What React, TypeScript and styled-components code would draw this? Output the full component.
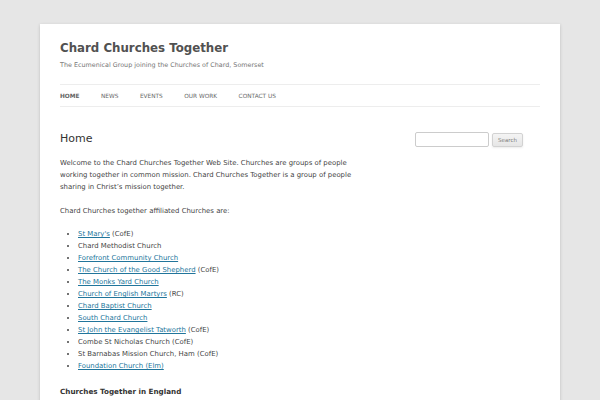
import React from 'react';
import styled, { createGlobalStyle } from 'styled-components';

const GlobalStyle = createGlobalStyle`
  html, body {
    margin: 0;
    padding: 0;
    background: #e6e6e6;
    font-family: "DejaVu Sans", "Open Sans", sans-serif;
    color: #444;
  }
`;

const Page = styled.div`
  width: 480px;
  margin: 24px 0 0 40px;
  padding: 0 20px 20px;
  background: #fff;
  box-shadow: rgba(100, 100, 100, 0.3) 0 1px 3px;
  min-height: 400px;
`;

const Header = styled.header`
  padding-top: 17px;
`;

const SiteTitle = styled.h1`
  margin: 0;
  font-size: 11.8px;
  line-height: 15px;
  font-weight: bold;
  color: #515151;
`;

const Tagline = styled.h2`
  margin: 4px 0 0;
  font-size: 6.4px;
  line-height: 10px;
  font-weight: normal;
  color: #757575;
`;

const Nav = styled.nav`
  margin-top: 14px;
  border-top: 1px solid #ededed;
  border-bottom: 1px solid #ededed;
`;

const NavList = styled.ul`
  display: flex;
  margin: 0;
  padding: 0;
  list-style: none;
  height: 21px;
  align-items: center;
`;

const NavItem = styled.li<{ $current?: boolean }>`
  margin-right: 21.5px;
  font-size: 5.8px;
  text-transform: uppercase;
  color: ${(p) => (p.$current ? '#636363' : '#6a6a6a')};
  font-weight: ${(p) => (p.$current ? 'bold' : 'normal')};
`;

const Main = styled.div`
  display: flex;
  justify-content: space-between;
  margin-top: 25px;
`;

const Content = styled.main`
  width: 312px;
`;

const Sidebar = styled.aside`
  width: 125px;
`;

const EntryTitle = styled.h1`
  margin: 0 0 11px;
  font-size: 11px;
  line-height: 14px;
  font-weight: normal;
  color: #333;
`;

const Para = styled.p`
  margin: 0 0 12px;
  font-size: 6.92px;
  line-height: 12px;
`;

const ChurchList = styled.ul`
  margin: -1px 0 14px 18px;
  padding: 0;
  list-style: disc outside;
  font-size: 6.92px;
  line-height: 12px;
`;

const Link = styled.a`
  color: #21759b;
  text-decoration: underline;
`;

const SubHeading = styled.h3`
  margin: 0;
  font-size: 7.2px;
  line-height: 12px;
  font-weight: bold;
  color: #333;
`;

const SearchForm = styled.form`
  display: flex;
  align-items: center;
  gap: 3px;
`;

const SearchInput = styled.input`
  box-sizing: border-box;
  width: 74px;
  height: 15px;
  border: 1px solid #ccc;
  border-radius: 2px;
  padding: 0 3px;
  font-size: 6px;
`;

const SearchButton = styled.button`
  box-sizing: border-box;
  width: 31px;
  height: 14px;
  padding: 0;
  font-family: inherit;
  font-size: 5.5px;
  color: #7c7c7c;
  background: linear-gradient(#f4f4f4, #e6e6e6);
  border: 1px solid #d2d2d2;
  border-radius: 2px;
  box-shadow: 0 1px 2px rgba(64, 64, 64, 0.1);
`;

const navItems = ['Home', 'News', 'Events', 'Our Work', 'Contact Us'];

const churches: { name: string; link?: boolean; note?: string }[] = [
  { name: "St Mary's", link: true, note: '(CofE)' },
  { name: 'Chard Methodist Church' },
  { name: 'Forefront Community Church', link: true },
  { name: 'The Church of the Good Shepherd', link: true, note: '(CofE)' },
  { name: 'The Monks Yard Church', link: true },
  { name: 'Church of English Martyrs', link: true, note: '(RC)' },
  { name: 'Chard Baptist Church', link: true },
  { name: 'South Chard Church', link: true },
  { name: 'St John the Evangelist Tatworth', link: true, note: '(CofE)' },
  { name: 'Combe St Nicholas Church (CofE)' },
  { name: 'St Barnabas Mission Church, Ham (CofE)' },
  { name: 'Foundation Church (Elm)', link: true },
];

export default function App() {
  return (
    <>
      <GlobalStyle />
      <Page>
        <Header>
          <SiteTitle>Chard Churches Together</SiteTitle>
          <Tagline>The Ecumenical Group joining the Churches of Chard, Somerset</Tagline>
          <Nav>
            <NavList>
              {navItems.map((item, i) => (
                <NavItem key={item} $current={i === 0}>
                  {item}
                </NavItem>
              ))}
            </NavList>
          </Nav>
        </Header>
        <Main>
          <Content>
            <EntryTitle>Home</EntryTitle>
            <Para>
              Welcome to the Chard Churches Together Web Site. Churches are groups of people
              working together in common mission. Chard Churches Together is a group of people
              sharing in Christ’s mission together.
            </Para>
            <Para>Chard Churches together affiliated Churches are:</Para>
            <ChurchList>
              {churches.map((c) => (
                <li key={c.name}>
                  {c.link ? <Link href="#">{c.name}</Link> : c.name}
                  {c.note ? ` ${c.note}` : ''}
                </li>
              ))}
            </ChurchList>
            <SubHeading>Churches Together in England</SubHeading>
          </Content>
          <Sidebar>
            <SearchForm onSubmit={(e) => e.preventDefault()}>
              <SearchInput type="text" />
              <SearchButton type="submit">Search</SearchButton>
            </SearchForm>
          </Sidebar>
        </Main>
      </Page>
    </>
  );
}
